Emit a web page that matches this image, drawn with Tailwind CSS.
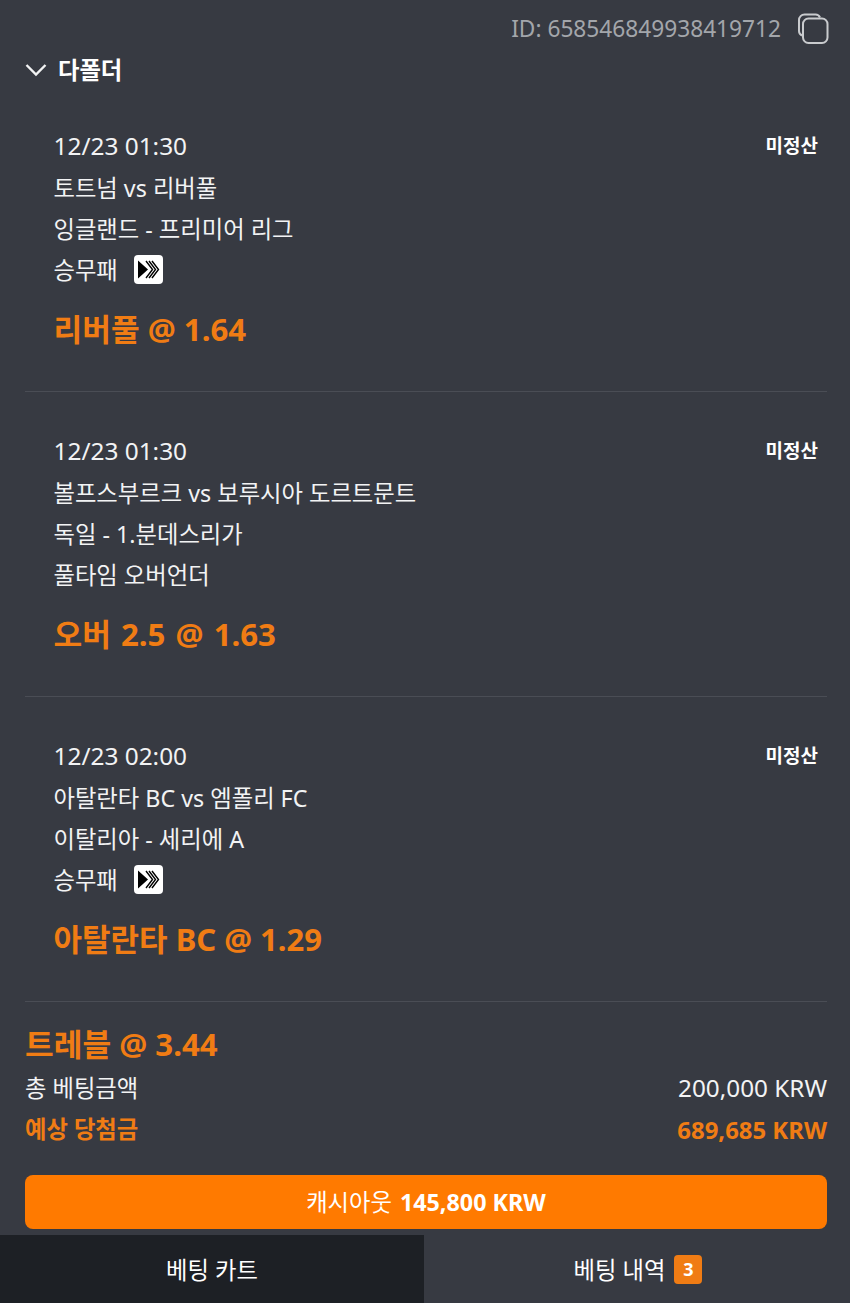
<!DOCTYPE html>
<html lang="ko">
<head>
<meta charset="utf-8">
<script src="https://cdn.jsdelivr.net/npm/@tailwindcss/browser@4"></script>
</head>
<body class="bg-[#373a42]">
<div class="w-[850px] h-[1303px] overflow-hidden flex flex-col bg-[#373a42] text-[#f2f3f4] text-[23.3px] font-['Noto_Sans','Noto_Sans_CJK_KR',sans-serif]">
  <div class="h-[50px] flex items-center justify-end pr-[21px] pt-[8px] gap-[16px] text-[#a3a6ab]">
    <span class="text-[22.7px]">ID: 658546849938419712</span>
    <svg class="w-[32px] h-[32px]" viewBox="0 0 32 32" fill="none" stroke="#c9cbce" stroke-width="2"><path d="M5 22.5 A5 5 0 0 1 2 18 V7 A5.5 5.5 0 0 1 7.5 1.5 H18 A5 5 0 0 1 23 4.5"/><rect x="6" y="5.5" width="24.5" height="24.5" rx="5.5"/></svg>
  </div>
  <div class="h-[37px] pt-[4px] flex items-center pl-[25px] gap-[11px] font-bold text-white">
    <svg class="w-[22px] h-[14px] -translate-y-[1px]" viewBox="0 0 22 14" fill="none" stroke="#f2f3f4" stroke-width="2.4"><path d="M1.5 2 L11 11.5 L20.5 2"/></svg>
    <span>다폴더</span>
  </div>

  <div class="ml-[25px] mr-[23px] border-b border-[#4a4d55] pl-[28.5px] pr-[9px] pt-[38.5px] pb-[36.5px]">
    <div class="h-[41px] flex items-center justify-between"><span class="text-[24.4px]">12/23 01:30</span><span class="text-[19px] font-bold text-white">미정산</span></div>
    <div class="h-[41px] pt-[2px] flex items-center">토트넘 vs 리버풀</div>
    <div class="h-[41px] pt-[2px] flex items-center">잉글랜드 - 프리미어 리그</div>
    <div class="h-[41px] flex items-center gap-[16px]"><span class="pt-[2px]">승무패</span>
      <svg class="w-[29px] h-[29px]" viewBox="0 0 29 29"><rect width="29" height="29" rx="4" fill="#fff"/><path d="M4 5.5 L14 14.5 L4 23.5Z" fill="#000"/><path d="M12 6 L18.5 14.5 L12 23 M15 6 L21.5 14.5 L15 23 M18 6 L24.5 14.5 L18 23" fill="none" stroke="#000" stroke-width="1.4"/></svg>
    </div>
    <div class="mt-[16px] mb-[1px] h-[48px] flex items-center text-[31.2px] font-bold text-[#f07c14]">리버풀 @ 1.64</div>
  </div>

  <div class="ml-[25px] mr-[23px] border-b border-[#4a4d55] pl-[28.5px] pr-[9px] pt-[38.5px] pb-[36.5px]">
    <div class="h-[41px] flex items-center justify-between"><span class="text-[24.4px]">12/23 01:30</span><span class="text-[19px] font-bold text-white">미정산</span></div>
    <div class="h-[41px] pt-[2px] flex items-center">볼프스부르크 vs 보루시아 도르트문트</div>
    <div class="h-[41px] pt-[2px] flex items-center">독일 - 1.분데스리가</div>
    <div class="h-[41px] pt-[2px] flex items-center">풀타임 오버언더</div>
    <div class="mt-[16px] mb-[1px] h-[48px] flex items-center text-[31.2px] font-bold text-[#f07c14] [word-spacing:2px]">오버 2.5 @ 1.63</div>
  </div>

  <div class="ml-[25px] mr-[23px] border-b border-[#4a4d55] pl-[28.5px] pr-[9px] pt-[38.5px] pb-[36.5px]">
    <div class="h-[41px] flex items-center justify-between"><span class="text-[24.4px]">12/23 02:00</span><span class="text-[19px] font-bold text-white">미정산</span></div>
    <div class="h-[41px] pt-[2px] flex items-center">아탈란타 BC vs 엠폴리 FC</div>
    <div class="h-[41px] pt-[2px] flex items-center">이탈리아 - 세리에 A</div>
    <div class="h-[41px] flex items-center gap-[16px]"><span class="pt-[2px]">승무패</span>
      <svg class="w-[29px] h-[29px]" viewBox="0 0 29 29"><rect width="29" height="29" rx="4" fill="#fff"/><path d="M4 5.5 L14 14.5 L4 23.5Z" fill="#000"/><path d="M12 6 L18.5 14.5 L12 23 M15 6 L21.5 14.5 L15 23 M18 6 L24.5 14.5 L18 23" fill="none" stroke="#000" stroke-width="1.4"/></svg>
    </div>
    <div class="mt-[16px] mb-[1px] h-[48px] flex items-center text-[31px] font-bold text-[#f07c14]">아탈란타 BC @ 1.29</div>
  </div>

  <div class="pr-[23px] pl-[25px] pt-[18px]">
    <div class="h-[48px] flex items-center text-[31.2px] font-bold text-[#f07c14]">트레블 @ 3.44</div>
    <div class="h-[41px] flex items-center justify-between"><span>총 베팅금액</span><span class="text-[24.3px]">200,000 KRW</span></div>
    <div class="h-[41px] flex items-center justify-between font-bold text-[#f07c14]"><span>예상 당첨금</span><span class="text-[23.9px]">689,685 KRW</span></div>
    <div class="mt-[25px] h-[54px] rounded-[8px] bg-[#ff7a00] flex items-center justify-center gap-[8px] text-white"><span>캐시아웃</span><span class="font-bold">145,800 KRW</span></div>
  </div>
  <div class="mt-[6px] h-[68px] flex">
    <div class="w-[424px] bg-[#1d2025] pt-[2px] flex items-center justify-center text-white">베팅 카트</div>
    <div class="flex-1 flex items-center justify-center gap-[9px] pl-[2px] text-white"><span class="pt-[2px]">베팅 내역</span><span class="w-[28px] h-[29px] rounded-[4px] bg-[#f07c14] flex items-center justify-center text-[18px] font-bold">3</span></div>
  </div>
</div>
</body>
</html>
